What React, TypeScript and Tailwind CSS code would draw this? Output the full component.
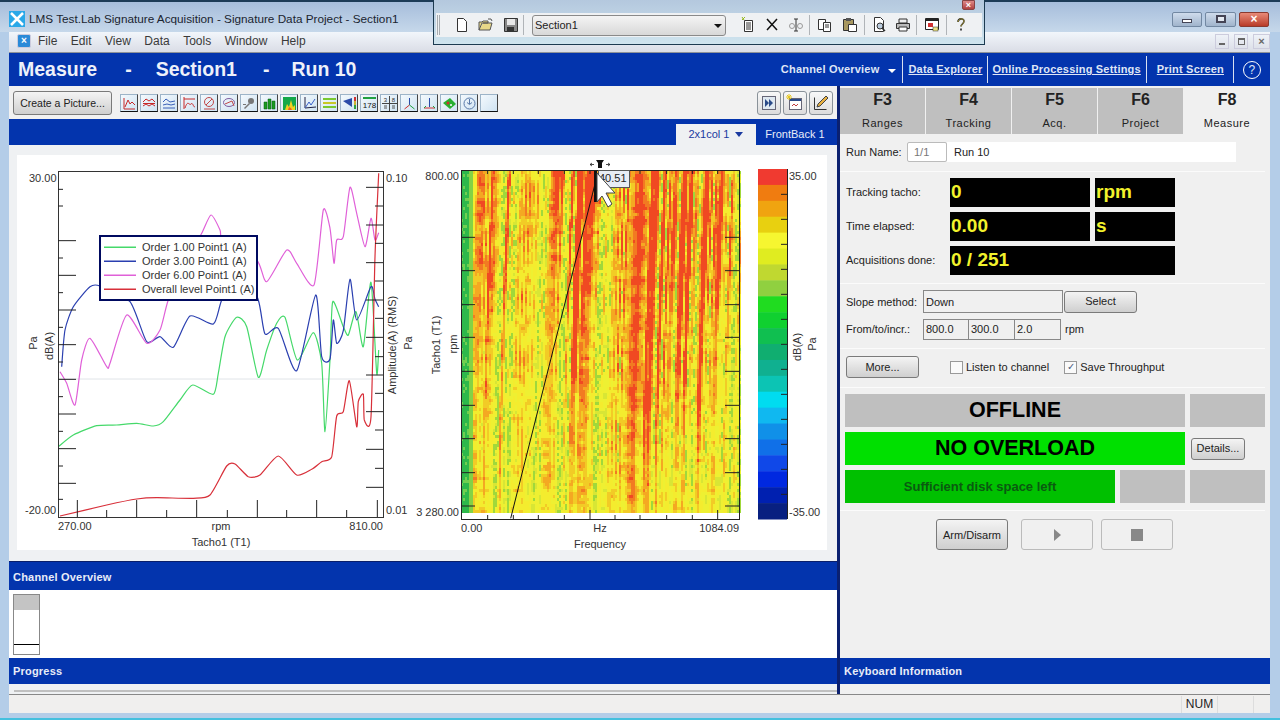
import React from "react";

const FONT = "'Liberation Sans', Arial, sans-serif";

// chart coordinates were read at 3x, so convert them back to page pixels
const toPath = (pts: number[][], ox: number, oy: number) => {
  const p = pts.map(([x, y]) => [x / 3 + ox, y / 3 + oy]);
  let d = `M${p[0][0].toFixed(1)} ${p[0][1].toFixed(1)}`;
  for (let i = 0; i < p.length - 1; i++) {
    const a = p[Math.max(i - 1, 0)];
    const b = p[i];
    const c = p[i + 1];
    const e = p[Math.min(i + 2, p.length - 1)];
    const c1x = b[0] + (c[0] - a[0]) / 9;
    const c1y = b[1] + (c[1] - a[1]) / 9;
    const c2x = c[0] - (e[0] - b[0]) / 9;
    const c2y = c[1] - (e[1] - b[1]) / 9;
    d += `C${c1x.toFixed(1)} ${c1y.toFixed(1)} ${c2x.toFixed(1)} ${c2y.toFixed(1)} ${c[0].toFixed(1)} ${c[1].toFixed(1)}`;
  }
  return d;
};

const greenLine = [[145,860],[190,825],[260,797],[320,795],[380,790],[430,798],[460,785],[510,720],[548,675],[610,703],[625,640],[645,530],[680,472],[710,500],[745,652],[770,570],[800,490],[825,472],[862,600],[910,518],[935,610],[945,815],[960,600],[968,425],[1000,500],[1015,525],[1038,455],[1060,560],[1083,367],[1100,640],[1106,570]];
const blueLine = [[155,620],[165,510],[190,440],[240,380],[270,378],[360,425],[410,545],[450,530],[490,562],[540,468],[610,492],[635,420],[690,300],[745,420],[765,522],[805,505],[860,632],[917,405],[935,590],[960,597],[970,480],[980,550],[1000,512],[1020,358],[1040,480],[1083,380],[1095,418],[1106,440]];
const pinkLine = [[150,635],[170,670],[195,735],[215,600],[240,535],[290,620],[300,610],[350,465],[410,550],[450,510],[475,420],[530,300],[575,220],[603,165],[630,210],[640,250],[740,300],[770,365],[830,270],[860,310],[912,375],[940,150],[960,205],[972,310],[980,240],[1000,230],[1020,82],[1040,160],[1065,260],[1083,175],[1095,240],[1106,218]];
const redLine = [[150,1068],[290,1035],[380,1017],[440,1013],[550,1015],[600,1005],[650,918],[675,912],[715,950],[750,945],[805,888],[860,945],[905,928],[935,905],[965,890],[980,768],[1000,755],[1018,662],[1040,800],[1045,725],[1060,703],[1063,780],[1083,770],[1095,290],[1106,40]];

const legend = [
  ["#45d96a", "Order 1.00 Point1 (A)"],
  ["#2a3fb0", "Order 3.00 Point1 (A)"],
  ["#e060d8", "Order 6.00 Point1 (A)"],
  ["#d8303a", "Overall level Point1 (A)"],
];

const colorBands = ["#f03a30","#f07c10","#f0a410","#e8d010","#f6f630","#e0ec20","#c0d830","#90d040","#20dc20","#10d030","#10bf50","#10ae70","#10b090","#0cc4b4","#00dcf0","#10b8f0","#1090e8","#1070e8","#1048e8","#0028e0","#0020b0","#082080"];

// seeded noise so the spectrogram is the same on every load
let seed = 12345;
const rnd = () => {
  seed = (seed * 16807) % 2147483647;
  return seed / 2147483647;
};
const blob = (x: number, y: number, cx: number, cy: number, sx: number, sy: number) =>
  Math.exp(-((x - cx) ** 2) / (2 * sx * sx) - ((y - cy) ** 2) / (2 * sy * sy));

function buildSpectrogram() {
  const fine: number[] = [];
  const wide: number[] = [];
  for (let i = 0; i < 300; i++) {
    fine.push(rnd());
    wide.push(rnd());
  }
  const lerp1 = (arr: number[], t: number) => {
    const i = Math.floor(t);
    return arr[i] + (arr[i + 1] - arr[i]) * (t - i);
  };
  const grid: number[][] = [];
  for (let r = 0; r < 80; r++) {
    const row: number[] = [];
    for (let c = 0; c < 80; c++) row.push(rnd());
    grid.push(row);
  }
  const patchAt = (u: number, v: number) => {
    const i = Math.floor(u);
    const j = Math.floor(v);
    const fu = u - i;
    const fv = v - j;
    const top = grid[j][i] + (grid[j][i + 1] - grid[j][i]) * fu;
    const bot = grid[j + 1][i] + (grid[j + 1][i + 1] - grid[j + 1][i]) * fu;
    return top + (bot - top) * fv;
  };
  const paths = new Map<string, string>();
  const add = (c: string, d: string) => paths.set(c, (paths.get(c) || "") + d);
  for (let x = 461; x < 740; x += 2) {
    for (let y = 171; y < 513; y += 3) {
      const slant = Math.pow((513 - y) / 342, 1.5) * 10;
      const t = x - slant + 12 - 450;
      const raw = 0.82 * lerp1(fine, t / 2) + 0.18 * lerp1(wide, t / 9);
      const col = Math.min(1, Math.max(0, (raw - 0.5) * 1.9 + 0.5));
      const patch = patchAt((x - 461) / 6, (y - 171) / 6);
      const heat =
        0.24 +
        0.42 * blob(x, y, 668, 245, 30, 85) +
        0.42 * blob(x, y, 705, 225, 24, 60) +
        0.42 * blob(x, y, 572, 270, 9, 85) +
        0.35 * blob(x, y, 578, 185, 14, 22) +
        0.24 * blob(x, y, 505, 240, 12, 90) +
        0.2 * blob(x, y, 490, 330, 6, 130) +
        0.22 * blob(x, y, 640, 420, 16, 90) +
        0.32 * blob(x, y, 695, 385, 6, 40) +
        0.2 * blob(x, y, 668, 375, 20, 25) +
        0.14 * blob(x, y, 600, 200, 130, 80);
      const v = 0.3 + heat * (0.3 + 0.9 * col) + 0.16 * (col - 0.5) + 0.34 * (patch - 0.5) + 0.1 * (rnd() - 0.5);
      let c = "#eef030";
      if (x < 473) c = x < 469 ? (rnd() > 0.85 ? "#6fcf50" : "#2db84c") : "#84d244";
      else if (col < 0.05 && rnd() > 0.5) c = "#a0d83a";
      else if (v < 0.3) c = "#d8e634";
      else if (v < 0.44) c = "#eef030";
      else if (v < 0.58) c = "#f4ec2e";
      else if (v < 0.68) c = "#f2cb26";
      else if (v < 0.8) c = "#f4a822";
      else if (v < 0.92) c = "#f27a22";
      else c = "#f04a22";
      add(c, `M${x} ${y}h2v3h-2z`);
    }
  }
  return [...paths.entries()];
}
const spectrogram = buildSpectrogram();

function LeftChart() {
  const leftMajor = [242, 346, 450, 554, 658, 762, 866, 970];
  const leftMinor = [88, 138, 294, 398, 502, 606, 710, 814, 918, 1018];
  const rightMajor = [82, 195, 308, 420, 532, 645, 755, 868, 982];
  const rightMinor = [138, 250, 363, 475, 590, 700, 810, 925];
  const botMajor = [202, 380, 560, 742, 920, 1102];
  const botMinor = [290, 470, 652, 830, 1010];
  const zx = (v: number) => v / 3 + 10;
  const zy = (v: number) => v / 3 + 160;
  return (
    <svg width={403} height={395} viewBox="17 155 403 395" className="block shrink-0" fontSize={11} fill="#333" style={{ fontFamily: FONT }}>
      <line x1={58} x2={383} y1={379} y2={379} stroke="#e0e4e8" />
      <path d={toPath(greenLine, 10, 160)} fill="none" stroke="#45d96a" strokeWidth={1.2} />
      <path d={toPath(blueLine, 10, 160)} fill="none" stroke="#2a3fb0" strokeWidth={1.2} />
      <path d={toPath(pinkLine, 10, 160)} fill="none" stroke="#e060d8" strokeWidth={1.2} />
      <path d={toPath(redLine, 10, 160)} fill="none" stroke="#d8303a" strokeWidth={1.2} />
      <rect x={58.5} y={171.5} width={325} height={346} fill="none" stroke="#333" />
      {leftMajor.map((y) => <line key={y} x1={58} x2={76} y1={zy(y)} y2={zy(y)} stroke="#222" />)}
      {leftMinor.map((y) => <line key={y} x1={58} x2={63} y1={zy(y)} y2={zy(y)} stroke="#222" />)}
      {rightMajor.map((y) => <line key={y} x1={366} x2={383} y1={zy(y)} y2={zy(y)} stroke="#222" />)}
      {rightMinor.map((y) => <line key={y} x1={375} x2={383} y1={zy(y)} y2={zy(y)} stroke="#222" />)}
      {botMajor.map((x) => <line key={x} x1={zx(x)} x2={zx(x)} y1={500} y2={517} stroke="#222" />)}
      {botMinor.map((x) => <line key={x} x1={zx(x)} x2={zx(x)} y1={510} y2={517} stroke="#222" />)}
      <text x={29} y={182}>30.00</text>
      <text x={25} y={514}>-20.00</text>
      <text x={386} y={182}>0.10</text>
      <text x={386} y={514}>0.01</text>
      <text x={58} y={530}>270.00</text>
      <text x={221} y={530} textAnchor="middle">rpm</text>
      <text x={383} y={530} textAnchor="end">810.00</text>
      <text x={221} y={546} textAnchor="middle">Tacho1 (T1)</text>
      <text transform="translate(37 343) rotate(-90)" textAnchor="middle">Pa</text>
      <text transform="translate(53 346) rotate(-90)" textAnchor="middle">dB(A)</text>
      <text transform="translate(396 345) rotate(-90)" textAnchor="middle">Amplitude(A) (RMS)</text>
      <text transform="translate(412 343) rotate(-90)" textAnchor="middle">Pa</text>
      <rect x={100} y={236} width={157} height={64} fill="#fff" stroke="#000a60" strokeWidth={2} />
      {legend.map(([c, t], i) => (
        <g key={t}>
          <rect x={104} y={246.5 + i * 14} width={32} height={1.5} fill={c} />
          <text x={142} y={251 + i * 14}>{t}</text>
        </g>
      ))}
    </svg>
  );
}

function RightChart() {
  const side = [262, 362, 464, 562, 664, 766, 866, 968, 1068];
  const top = [203, 280, 355, 433, 510, 585, 660, 740, 817, 893];
  const barTicks = [133, 208, 283, 358, 433, 508, 583, 658, 733, 808, 883, 958, 1033];
  const zx = (v: number) => v / 3 + 420;
  const zy = (v: number) => v / 3 + 150;
  const bandH = 350 / colorBands.length;
  return (
    <svg width={407} height={395} viewBox="420 155 407 395" className="block shrink-0 overflow-visible" fontSize={11} fill="#333" style={{ fontFamily: FONT }}>
      <defs>
        <filter id="soft" x="0" y="0" width="100%" height="100%">
          <feGaussianBlur stdDeviation="0.6" />
        </filter>
      </defs>
      <g filter="url(#soft)">
        {spectrogram.map(([c, d]) => <path key={c} d={d} fill={c} />)}
      </g>
      <rect x={461.5} y={170.5} width={278} height={349} fill="none" stroke="#222" />
      {side.map((y) => (
        <g key={y} stroke="#222">
          <line x1={461} x2={475} y1={zy(y)} y2={zy(y)} />
          <line x1={725} x2={740} y1={zy(y)} y2={zy(y)} />
        </g>
      ))}
      {top.map((x) => (
        <g key={x} stroke="#222">
          <line x1={zx(x)} x2={zx(x)} y1={170} y2={174} />
          <line x1={zx(x)} x2={zx(x)} y1={x === 510 || x === 893 ? 510 : 515} y2={520} />
        </g>
      ))}
      <line x1={510.7} y1={518.3} x2={596} y2={180} stroke="#111" />
      {colorBands.map((c, i) => <rect key={c + i} x={758} y={169 + i * bandH} width={29} height={bandH + 0.5} fill={c} />)}
      {barTicks.map((y) => <line key={y} x1={781} x2={787} y1={zy(y)} y2={zy(y)} stroke="#222" />)}
      <line x1={787.5} x2={787.5} y1={169} y2={519} stroke="#222" />
      <text x={459} y={180} textAnchor="end">800.00</text>
      <text x={459} y={516} textAnchor="end">3 280.00</text>
      <text x={461} y={532}>0.00</text>
      <text x={600} y={532} textAnchor="middle">Hz</text>
      <text x={739} y={532} textAnchor="end">1084.09</text>
      <text x={600} y={548} textAnchor="middle">Frequency</text>
      <text x={789} y={180}>35.00</text>
      <text x={789} y={516}>-35.00</text>
      <text transform="translate(440 345) rotate(-90)" textAnchor="middle">Tacho1 (T1)</text>
      <text transform="translate(457 344) rotate(-90)" textAnchor="middle">rpm</text>
      <text transform="translate(801 347) rotate(-90)" textAnchor="middle">dB(A)</text>
      <text transform="translate(816 344) rotate(-90)" textAnchor="middle">Pa</text>
      {/* cursor marker and readout */}
      <path d="M596 160h8l-2 3v5h-4v-5z" fill="#111" />
      <path d="M590 164.500h4M592 163l-2 1.500 2 1.500M606 164.500h4M608 163l2 1.500-2 1.500" stroke="#222" fill="none" strokeWidth={0.8} />
      <rect x={598.5} y={170.5} width={31} height={17} fill="#e8ecf4" stroke="#555" />
      <text x={599} y={182} fill="#222">40.51</text>
      <rect x={594} y={171} width={3} height={31} fill="#111" />
      <path d="M597 173L615 193L606 193L612 204L608 207L602 196L597 202Z" fill="#fff" stroke="#444" strokeWidth={1} />
    </svg>
  );
}

// small chart-type glyphs for the Create a Picture toolbar
const chartIcons: React.ReactNode[] = [
  <path d="M3 3v11h11M4 12l3-7 2 4 2-2 3 3" stroke="#c82828" fill="none" />,
  <path d="M2 7l3-3 3 2 3-2 3 3M2 11l3-2 3 2 3-2 3 2M2 8.500h12" stroke="#c82828" fill="none" />,
  <path d="M2 7l3-3 4 3 5-1M2 10l4-1 4 1 4-1M2 13h12" stroke="#3a60b8" fill="none" />,
  <path d="M3 2v12M3 4h11M4 13c3-9 4-2 6-4s2 3 4 3" stroke="#c82828" fill="none" />,
  <g fill="none" stroke="#c04848"><circle cx={8} cy={7} r={4.500} /><path d="M5 10l6-6M3 14h11" /></g>,
  <g fill="none" stroke="#8060a0"><ellipse cx={8} cy={7.500} rx={5.500} ry={4} /><path d="M4 9l7-3 2 5" stroke="#c04848" /></g>,
  <g fill="#777"><circle cx={10} cy={6} r={3} /><path d="M3 13l5-5 1 1-5 5z" /><path d="M2 9h3v1H2z" /></g>,
  <path d="M3 7h3v7H3zM7 4h3v10H7zM11 6h3v8h-3z" fill="#1a9a20" stroke="#0a5a10" strokeWidth={0.5} />,
  <g><rect x={2} y={2} width={13} height={13} fill="#14a84a" /><path d="M4 15l2-6 2 3 2-7 2 7 2-2v5z" fill="#f0d020" /><path d="M7 15l1-3 2 1 1 2z" fill="#f06020" /></g>,
  <g fill="none"><path d="M4 2v11l11-1" stroke="#224" /><path d="M4 13l4-6 2 3 4-6" stroke="#3a60c8" /></g>,
  <g><rect x={2} y={3} width={13} height={2} fill="#7ac830" /><rect x={2} y={7} width={13} height={2} fill="#c8c828" /><rect x={2} y={11} width={13} height={2} fill="#7ac830" /></g>,
  <g><path d="M2 6l9-3v9z" fill="#2a4aa8" /><rect x={13} y={2} width={2} height={4} fill="#d03030" /><rect x={13} y={6} width={2} height={4} fill="#d0b030" /><rect x={13} y={10} width={2} height={4} fill="#30a040" /></g>,
  <g><rect x={2} y={2} width={13} height={2} fill="#20a040" /><text x={8.500} y={13} fontSize={8} textAnchor="middle" fill="#111">178</text></g>,
  <g><path d="M8.500 1v15M1 8.500h15" stroke="#444" /><text x={4.500} y={7} fontSize={6} textAnchor="middle" fill="#333">3</text><text x={12.500} y={7} fontSize={6} textAnchor="middle" fill="#333">8</text><path d="M3 11h3M3 13h3M11 11h3M11 13h3" stroke="#555" /></g>,
  <g fill="none"><path d="M8.500 3v7" stroke="#2a4aa8" /><path d="M8.500 10l-5 4" stroke="#d03030" /><path d="M8.500 10l5 4" stroke="#20a040" /></g>,
  <g fill="none"><path d="M8.500 3v9" stroke="#2a4aa8" /><path d="M3 13h11" stroke="#d03030" /><path d="M3 13l2-2M14 13l-2-2" stroke="#20a040" /></g>,
  <g><path d="M2 8l7-5 6 6-6 5z" fill="#28b030" /><circle cx={7} cy={8} r={1.500} fill="#d03030" /><circle cx={10} cy={10} r={1} fill="#fff" /></g>,
  <g fill="none" stroke="#5878a8"><circle cx={8.500} cy={8.500} r={5.500} /><path d="M8.500 4v5M6 7.500l2.500 2 2.500-2" /></g>,
  null,
];

function ToolIcon({ children }: { children: React.ReactNode }) {
  return (
    <div className="w-[18px] h-[18px] mr-[2px] bg-gradient-to-br from-[#f4f9fd] to-[#cfe3f2] border border-[#9db4c8] border-b-[#111] border-r-[#444] shrink-0">
      <svg width={17} height={17} viewBox="0 0 17 17" className="block" style={{ fontFamily: FONT }}>{children}</svg>
    </div>
  );
}

function SquareBtn({ children }: { children: React.ReactNode }) {
  return (
    <div className="w-[24px] h-[24px] border border-[#8a9299] rounded-[3px] bg-gradient-to-b from-[#f8f8f8] to-[#dcdcdc] flex items-center justify-center">
      <svg width={18} height={18} viewBox="0 0 18 18">{children}</svg>
    </div>
  );
}

function Btn({ label, className }: { label: string; className: string }) {
  return (
    <div className={`flex items-center justify-center border border-[#7a7a7a] rounded-[3px] bg-gradient-to-b from-[#f4f4f4] to-[#cfcfcf] text-[#222] ${className}`}>
      {label}
    </div>
  );
}

function Readout({ text, className }: { text: string; className: string }) {
  return <div className={`h-[29px] bg-black text-[#f2f22c] font-bold text-[19px] leading-[28px] pl-[1px] ${className}`}>{text}</div>;
}

function Divider() {
  return <div className="h-[1px] bg-[#fbfbfb] mr-[5px]" />;
}

function SmallIcon({ children }: { children: React.ReactNode }) {
  return <svg width={16} height={18} viewBox="0 0 16 18" className="block shrink-0">{children}</svg>;
}

function Sep({ className }: { className: string }) {
  return <div className={`w-[1px] h-[20px] bg-[#b0b4b8] shrink-0 ${className}`} />;
}

function FloatingToolbar() {
  return (
    <div className="absolute left-[433px] top-0 w-[552px] h-[45px] border-l border-b border-r border-[#1c3a50] bg-gradient-to-b from-[#b4c8de] to-[#cfe4ee]">
      <div className="absolute right-[9px] top-0 w-[13px] h-[10px] rounded-b-[2px] bg-gradient-to-b from-[#d88] to-[#b04040] border border-[#844] text-white text-[9px] leading-[8px] text-center font-bold">×</div>
      <div className="mt-[13px] ml-[2px] mr-[2px] h-[24px] bg-[#eff1f3] flex items-center text-[11px]">
        <div className="w-[3px] h-[20px] border-x border-[#a8acb0] ml-[1px] mr-[14px] shrink-0" />
        <SmallIcon><path d="M3.500 2.500h6l3 3v10h-9z" fill="#fff" stroke="#333" /></SmallIcon>
        <div className="w-[8px] shrink-0" />
        <SmallIcon><path d="M1 14V6h3l1-1h5v2H4l-3 7h11l2-7H5" fill="#e8d888" stroke="#555" /><path d="M10 3l3 0 1 2" fill="none" stroke="#555" /></SmallIcon>
        <div className="w-[9px] shrink-0" />
        <SmallIcon><path d="M1.500 2.500h13v13h-13z" fill="#888" stroke="#333" /><rect x={4} y={3} width={8} height={6} fill="#e8e8e8" /><rect x={4} y={11} width={7} height={4} fill="#333" /></SmallIcon>
        <Sep className="ml-[4px] mr-[8px]" />
        <div className="w-[194px] h-[21px] shrink-0 pt-[1px] border border-[#8a8a8a] rounded-[3px] bg-gradient-to-b from-[#f4f4f4] to-[#d8d8d8] flex items-center justify-between pl-[2px] pr-[2px] text-[#222]">
          Section1
          <span className="w-0 h-0 mr-[1px] border-x-[4px] border-x-transparent border-t-[4px] border-t-[#111]" />
        </div>
        <div className="w-[14px] shrink-0" />
        <SmallIcon><path d="M4.500 4.500h8v11h-8z" fill="#fff" stroke="#333" /><path d="M6 7h5M6 9h5M6 11h5M6 13h5" stroke="#333" /><path d="M2 1l2 3M5 1L2 4" stroke="#98b820" /></SmallIcon>
        <div className="w-[8px] shrink-0" />
        <SmallIcon><path d="M3 3l10 11M13 3L3 14" stroke="#111" strokeWidth={1.500} /></SmallIcon>
        <div className="w-[8px] shrink-0" />
        <SmallIcon><path d="M8 3v12M6 3h4M6 15h4" stroke="#333" /><circle cx={4} cy={10} r={2.500} fill="none" stroke="#999" /><circle cx={12} cy={10} r={2.500} fill="none" stroke="#999" /></SmallIcon>
        <Sep className="ml-[5px] mr-[7px]" />
        <SmallIcon><path d="M1.500 3.500h7v10h-7z" fill="#fff" stroke="#333" /><path d="M6.500 6.500h7v9h-7z" fill="#fff" stroke="#333" /><path d="M8 9h4M8 11h4" stroke="#333" /></SmallIcon>
        <div className="w-[9px] shrink-0" />
        <SmallIcon><path d="M1.500 3.500h10v11h-10z" fill="#a89860" stroke="#333" /><path d="M4 2h5v3H4z" fill="#555" /><path d="M6.500 8.500h8v7h-8z" fill="#fff" stroke="#333" /></SmallIcon>
        <Sep className="ml-[6px] mr-[6px]" />
        <SmallIcon><path d="M3.500 1.500h6l3 3v11h-9z" fill="#fff" stroke="#333" /><circle cx={9} cy={10} r={3} fill="#bcd" stroke="#333" /><path d="M11 12l3 3" stroke="#333" strokeWidth={1.500} /></SmallIcon>
        <div className="w-[8px] shrink-0" />
        <SmallIcon><path d="M4 3h8v4H4z" fill="#eee" stroke="#333" /><path d="M1.500 7.500h13v5h-13z" fill="#bbb" stroke="#333" /><path d="M4 11h8v4H4z" fill="#fff" stroke="#333" /></SmallIcon>
        <Sep className="ml-[5px] mr-[7px]" />
        <SmallIcon><path d="M1.500 2.500h13v11h-13z" fill="#fff" stroke="#222" /><rect x={2} y={3} width={12} height={2} fill="#222" /><rect x={4} y={7} width={5} height={4} fill="#d03030" /><rect x={9} y={11} width={5} height={4} fill="#e8e080" stroke="#333" strokeWidth={0.5} /></SmallIcon>
        <Sep className="ml-[6px] mr-[6px]" />
        <SmallIcon><path d="M5 6c0-4 6-4 6-1 0 3-3 3-3 5.500M8 12.500v2" fill="none" stroke="#222" strokeWidth={1.600} /><path d="M5 6c0-4 6-4 6-1 0 3-3 3-3 5.500" fill="none" stroke="#e8d040" strokeWidth={0.6} /></SmallIcon>
      </div>
    </div>
  );
}

export default function App() {
  const menus = ["File", "Edit", "View", "Data", "Tools", "Window", "Help"];
  const tabs = [["F3", "Ranges"], ["F4", "Tracking"], ["F5", "Acq."], ["F6", "Project"]];
  const barHead = "bg-[#0334ad] text-[#e8ecf8] text-[11px] font-bold flex items-center tracking-[0.2px]";
  return (
    <div className="relative w-[1280px] h-[720px] overflow-hidden bg-[#b4cde8] text-[#222]" style={{ fontFamily: FONT }}>
      {/* title bar */}
      <div className="h-[32px] pt-[3px] border-t-2 border-[#1c3b57] bg-gradient-to-b from-[#a6bddb] to-[#c6d8ea] flex items-center pl-[9px] pr-[11px]">
        <div className="w-[16px] h-[16px] bg-[#2aa8e8] mr-[4px] flex items-center justify-center shrink-0">
          <svg width={16} height={16} viewBox="0 0 16 16"><path d="M2 2l12 12M14 2L2 14" stroke="#fff" strokeWidth={2.500} /></svg>
        </div>
        <span className="text-[11.75px] text-[#1a2430]">LMS Test.Lab Signature Acquisition - Signature Data Project - Section1</span>
        <div className="ml-auto flex gap-[3px] mt-[1px]">
          <div className="w-[30px] h-[15px] rounded-[2px] border border-[#7288a2] bg-gradient-to-b from-[#cfdcec] to-[#a0b4cc] flex items-center justify-center"><span className="w-[10px] h-[4px] border border-[#445] bg-white mt-[3px]" /></div>
          <div className="w-[31px] h-[15px] rounded-[2px] border border-[#7288a2] bg-gradient-to-b from-[#cfdcec] to-[#a0b4cc] flex items-center justify-center"><span className="w-[10px] h-[8px] border-2 border-[#445] bg-white/60" /></div>
          <div className="w-[30px] h-[15px] rounded-[2px] border border-[#8a3a30] bg-gradient-to-b from-[#e88a78] to-[#b83a28] text-white text-[12px] font-bold leading-[13px] text-center">×</div>
        </div>
      </div>

      <div className="ml-[9px] w-[1261px] flex flex-col">
        {/* menu */}
        <div className="h-[21px] pb-[2px] bg-gradient-to-b from-[#f2f6fb] to-[#dadde6] border-b border-[#8d9299] flex items-center text-[12px] text-[#3a3a3a]">
          <div className="w-[14px] h-[14px] ml-[8px] mr-[7px] bg-[#2a8ad8] rounded-[2px] border border-[#ccd] text-white text-[10px] leading-[12px] text-center font-bold">×</div>
          <div className="flex gap-[13.500px]">{menus.map((m) => <span key={m}>{m}</span>)}</div>
          <div className="ml-auto flex gap-[5px] text-[#666] text-[11px] mr-0">
            <span className="w-[14px] h-[15px] border border-[#ccd] flex items-end justify-center pb-[3px]"><span className="w-[6px] h-[2px] bg-[#666]" /></span>
            <span className="w-[14px] h-[15px] border border-[#ccd] flex items-center justify-center"><span className="w-[7px] h-[7px] border border-[#666] border-t-2" /></span>
            <span className="w-[17px] h-[15px] border border-[#ccd] text-center font-bold leading-[13px]">×</span>
          </div>
        </div>

        {/* blue header */}
        <div className="h-[33px] bg-[#0334ad] flex items-center text-white pl-[9px]">
          <div className="flex text-[19.500px] font-bold text-[#eef1fa]">
            <span>Measure</span>
            <span className="ml-[28px]">-</span>
            <span className="ml-[24px]">Section1</span>
            <span className="ml-[26px]">-</span>
            <span className="ml-[22px]">Run 10</span>
          </div>
          <div className="ml-auto flex items-center text-[11px] font-bold text-[#dfe6f6] h-full tracking-[0.2px]">
            <span>Channel Overview</span>
            <span className="ml-[9px] mr-[6px] mt-[2px] w-0 h-0 border-x-[4px] border-x-transparent border-t-[4px] border-t-white" />
            <span className="w-[1px] h-[27px] bg-[#d8e0f0]" />
            <span className="ml-[5px] mr-[4px] underline">Data Explorer</span>
            <span className="w-[1px] h-[27px] bg-[#d8e0f0]" />
            <span className="ml-[5px] mr-[5px] underline">Online Processing Settings</span>
            <span className="w-[1px] h-[27px] bg-[#d8e0f0]" />
            <span className="ml-[10px] mr-[9px] underline">Print Screen</span>
            <span className="w-[1px] h-[27px] bg-[#d8e0f0]" />
            <span className="ml-[9px] mr-[9px] w-[18px] h-[18px] rounded-full border border-white flex items-center justify-center text-[12px] font-normal">?</span>
          </div>
        </div>

        <div className="h-[608px] flex">
          {/* left column */}
          <div className="w-[828px] flex flex-col bg-[#eff1f3]">
            <div className="h-[33px] flex items-center pt-[1px] pl-[4px] pr-[4px] bg-[#f1f1f1]">
              <Btn label="Create a Picture..." className="w-[99px] h-[24px] pt-[1px] text-[10.500px]" />
              <div className="flex ml-[8px]">
                {chartIcons.map((ic, i) => <ToolIcon key={i}>{ic}</ToolIcon>)}
              </div>
              <div className="ml-auto flex gap-[2px]">
                <SquareBtn><rect x={2.500} y={2.500} width={13} height={13} fill="#dfe8f0" stroke="#667" /><path d="M5 5l4 4-4 4zM9 5l4 4-4 4z" fill="#2a4a88" /></SquareBtn>
                <SquareBtn><rect x={3.500} y={4.500} width={12} height={11} fill="#fff" stroke="#667" /><rect x={4} y={5} width={11} height={2} fill="#2a4a88" /><path d="M6 12l2-2 2 2 2-2" stroke="#c04040" fill="none" /><path d="M1 1l4 4M5 1L1 5M3 0v6M0 3h6" stroke="#e8c820" /></SquareBtn>
                <SquareBtn><path d="M2.500 3.500v12h12" fill="none" stroke="#333" /><path d="M5 13l1-3 8-8 2 2-8 8z" fill="#e8b040" stroke="#444" /></SquareBtn>
              </div>
            </div>
            <div className="h-[26px] bg-[#0334ad] flex items-end justify-end text-[11px] text-[#e8ecf8]">
              <div className="w-[80px] h-[21px] bg-[#eff1f3] text-[#1a3aa0] flex items-center justify-center gap-[6px]">
                2x1col 1
                <span className="w-0 h-0 border-x-[4px] border-x-transparent border-t-[5px] border-t-[#1a3aa0]" />
              </div>
              <div className="w-[81px] h-[21px] pr-[3px] flex items-center justify-center">FrontBack 1</div>
            </div>
            <div className="h-[416px] pt-[10px] pl-[8px]">
              <div className="w-[810px] h-[395px] bg-white flex">
                <LeftChart />
                <RightChart />
              </div>
            </div>
            <div className="h-[1px] bg-[#0a1f6a]" />
            <div className={`h-[28px] pl-[4px] pt-[2px] ${barHead}`}>Channel Overview</div>
            <div className="h-[68px] bg-white pt-[4px] pl-[4px]">
              <div className="w-[27px] h-[61px] border border-[#888] bg-white flex flex-col">
                <div className="h-[15px] bg-[#c4c4c4]" />
                <div className="h-[1px] mt-[34px] bg-black" />
              </div>
            </div>
            <div className={`h-[26px] pl-[4px] ${barHead}`}>Progress</div>
            <div className="h-[10px] pt-[6px] pl-[5px]">
              <div className="h-[2px] bg-[#c0c0c0]" />
            </div>
          </div>

          <div className="w-[3px] bg-[#0b2070]" />

          {/* right column */}
          <div className="w-[430px] flex flex-col bg-[#f0f0f0] text-[11px]">
            <div className="h-[48px] pt-[2px] flex shrink-0">
              {tabs.map(([k, l]) => (
                <div key={k} className="w-[85px] mr-[1px] bg-[#bfbfbf] flex flex-col items-center">
                  <span className="text-[16px] font-bold mt-[3px] leading-[18px] text-[#222]">{k}</span>
                  <span className="mt-[6px] text-[#222] tracking-[0.5px]">{l}</span>
                </div>
              ))}
              <div className="flex-1 flex flex-col items-center">
                <span className="text-[16px] font-bold mt-[3px] leading-[18px] text-[#222]">F8</span>
                <span className="mt-[6px] text-[#222] tracking-[0.5px]">Measure</span>
              </div>
            </div>

            <div className="h-[37px] pt-[8px] pl-[6px] shrink-0">
              <div className="h-[20px] flex items-center">
                <span className="w-[61px] pt-[1px]">Run Name:</span>
                <div className="w-[40px] h-[20px] border border-[#bbb] rounded-[2px] bg-white text-[#777] pl-[6px] leading-[19px]">1/1</div>
                <div className="w-[289px] h-[20px] bg-white pl-[7px] leading-[21px]">Run 10</div>
              </div>
            </div>
            <Divider />

            <div className="h-[111px] pt-[6px] pl-[6px] flex flex-col gap-[5px] shrink-0">
              <div className="flex items-center">
                <span className="w-[104px]">Tracking tacho:</span>
                <Readout text="0" className="w-[140px]" />
                <Readout text="rpm" className="w-[80px] ml-[5px]" />
              </div>
              <div className="flex items-center">
                <span className="w-[104px]">Time elapsed:</span>
                <Readout text="0.00" className="w-[140px]" />
                <Readout text="s" className="w-[80px] ml-[5px]" />
              </div>
              <div className="flex items-center">
                <span className="w-[104px]">Acquisitions done:</span>
                <Readout text="0 / 251" className="w-[225px]" />
              </div>
            </div>
            <Divider />

            <div className="h-[64px] pt-[6px] pl-[6px] shrink-0">
              <div className="flex items-center h-[23px]">
                <span className="w-[77px] pt-[1px]">Slope method:</span>
                <div className="w-[140px] h-[23px] border border-[#888] pl-[2px] leading-[22px]">Down</div>
                <Btn label="Select" className="w-[73px] h-[22px] ml-[1px] text-[11px]" />
              </div>
              <div className="flex items-center h-[21px] mt-[6px]">
                <span className="w-[77px]">From/to/incr.:</span>
                <div className="w-[46px] h-[21px] border border-[#888] pl-[2px] leading-[19px]">800.0</div>
                <div className="w-[46px] h-[21px] border border-[#888] border-l-0 pl-[2px] leading-[19px]">300.0</div>
                <div className="w-[46px] h-[21px] border border-[#888] border-l-0 pl-[2px] leading-[19px]">2.0</div>
                <span className="ml-[4px]">rpm</span>
              </div>
            </div>
            <Divider />

            <div className="h-[38px] pt-[7px] pl-[6px] flex shrink-0 items-start">
              <Btn label="More..." className="w-[73px] h-[22px] text-[11px]" />
              <div className="h-[22px] flex items-center ml-[31px]">
                <div className="w-[13px] h-[13px] border border-[#999] bg-[#fafafa] mr-[3px]" />
                Listen to channel
              </div>
              <div className="h-[22px] flex items-center ml-[15px]">
                <div className="w-[13px] h-[13px] border border-[#999] bg-[#fafafa] mr-[3px] flex items-center justify-center text-[#4a5a80] text-[10px] leading-none">✓</div>
                Save Throughput
              </div>
            </div>
            <Divider />

            <div className="h-[122px] pt-[6px] pl-[5px] flex flex-col gap-[5px] shrink-0">
              <div className="flex gap-[5px] h-[33px]">
                <div className="w-[340px] pb-[1px] bg-[#bfbfbf] flex items-center justify-center font-bold text-[21.500px] text-black">OFFLINE</div>
                <div className="w-[75px] bg-[#bfbfbf]" />
              </div>
              <div className="flex h-[33px] items-center">
                <div className="w-[340px] h-full pb-[1px] bg-[#00e000] flex items-center justify-center font-bold text-[21.500px] text-black">NO OVERLOAD</div>
                <Btn label="Details..." className="w-[54px] h-[22px] ml-[6px] text-[11px]" />
              </div>
              <div className="flex gap-[5px] h-[33px]">
                <div className="w-[270px] bg-[#00c000] flex items-center justify-center font-bold text-[13px] text-[#0a5a10]">Sufficient disk space left</div>
                <div className="w-[65px] bg-[#bfbfbf]" />
                <div className="w-[75px] bg-[#bfbfbf]" />
              </div>
            </div>
            <Divider />

            <div className="pt-[8px] pl-[96px] flex flex-1 items-start">
              <Btn label="Arm/Disarm" className="w-[72px] h-[31px] text-[11px] pt-[1px]" />
              <div className="w-[72px] h-[31px] ml-[13px] border border-[#bbb] rounded-[3px] flex items-center justify-center">
                <span className="w-0 h-0 border-y-[6px] border-y-transparent border-l-[7px] border-l-[#888]" />
              </div>
              <div className="w-[72px] h-[31px] ml-[8px] border border-[#bbb] rounded-[3px] flex items-center justify-center">
                <span className="w-[12px] h-[12px] bg-[#888]" />
              </div>
            </div>
            <div className={`h-[26px] pl-[4px] shrink-0 ${barHead}`}>Keyboard Information</div>
            <div className="h-[10px] shrink-0" />
          </div>
        </div>

        {/* status bar */}
        <div className="h-[19px] bg-[#f0efee] border-t border-[#888] flex items-center justify-end text-[12px] text-[#222]">
          <div className="w-[36px] h-[17px] border-l border-[#ddd] flex items-center justify-center">NUM</div>
          <div className="w-[36px] h-[17px] border-l border-[#ddd]" />
          <div className="w-[17px] h-[17px] border-l border-[#ddd]" />
        </div>
      </div>

      <div className="absolute left-0 right-0 bottom-0 h-[2px] bg-[#44c0de]" />
      <FloatingToolbar />
    </div>
  );
}
